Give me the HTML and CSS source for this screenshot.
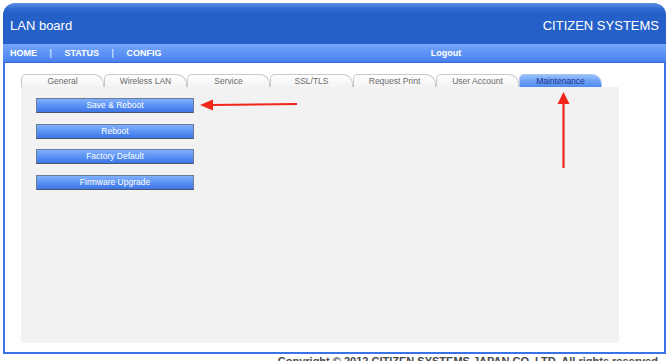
FILE: index.html
```html
<!DOCTYPE html>
<html lang="en">
<head>
    <meta charset="UTF-8">
    <title>LAN board - Maintenance</title>
    <link rel="stylesheet" href="styles.css">
</head>
<body>
    <div class="page">
        <div class="header">
            <div class="title">LAN board</div>
            <div class="brand">CITIZEN SYSTEMS</div>
        </div>

        <div class="nav">
            <div class="nav-left">
                <a href="#">HOME</a>
                <span class="sep">|</span>
                <a href="#">STATUS</a>
                <span class="sep">|</span>
                <a href="#">CONFIG</a>
            </div>
            <div class="nav-right">
                <a href="#">Logout</a>
            </div>
        </div>

        <div class="panel">
            <div class="tabs">
                <div class="tab">General</div>
                <div class="tab">Wireless LAN</div>
                <div class="tab">Service</div>
                <div class="tab">SSL/TLS</div>
                <div class="tab">Request Print</div>
                <div class="tab">User Account</div>
                <div class="tab active">Maintenance</div>
            </div>
            <div class="tab-body">
                <button class="action-btn">Save &amp; Reboot</button>
                <button class="action-btn">Reboot</button>
                <button class="action-btn">Factory Default</button>
                <button class="action-btn">Firmware Upgrade</button>
            </div>
        </div>

        <div class="footer">Copyright &copy; 2012 CITIZEN SYSTEMS JAPAN CO.,LTD. All rights reserved.</div>
    </div>

    <!-- annotation arrows -->
    <svg class="marks" width="670" height="361" viewBox="0 0 670 361">
        <line x1="297" y1="104" x2="211" y2="105" stroke="#f2261a" stroke-width="2.2"/>
        <polygon points="200,105 213,99.5 213,110.5" fill="#f2261a"/>
        <line x1="563.5" y1="168" x2="563.5" y2="102" stroke="#f2261a" stroke-width="2.2"/>
        <polygon points="563.5,92 557.5,104 569.5,104" fill="#f2261a"/>
    </svg>
</body>
</html>
```

FILE: styles.css
```css
body {
    margin: 0;
    padding: 3px 3px 0 3px;
    background: #fff;
    font-family: "Liberation Sans", Arial, sans-serif;
    overflow: hidden;
}
.page {
    width: 663px;
}
.header {
    height: 41px;
    display: flex;
    align-items: center;
    justify-content: space-between;
    padding: 4px 7px 0 7px;
    box-sizing: border-box;
    background: linear-gradient(#5c8de2 0, #2f69d0 6px, #2460c8 12px, #2460c8 100%);
    border-radius: 12px 12px 0 0;
    color: #fff;
    font-size: 13px;
}
.nav {
    height: 19px;
    display: flex;
    align-items: center;
    background: linear-gradient(#74a5fa, #5a90f5 60%, #4a80ec);
    border-bottom: 1px solid #3a6ad8;
    box-sizing: border-box;
    font-size: 9px;
    font-weight: bold;
}
.nav a {
    color: #fff;
    text-decoration: none;
}
.nav-left {
    width: 223px;
    padding-left: 7px;
    box-sizing: border-box;
    color: #fff;
}
.sep {
    padding: 0 10px;
    font-weight: normal;
}
.nav-right {
    flex: 1;
    text-align: center;
}
.panel {
    height: 291px;
    box-sizing: border-box;
    border: 2px solid #3a72e8;
    border-top: none;
    padding: 11px 0 0 16px;
}
.tabs {
    display: flex;
    height: 13px;
}
.tab {
    width: 83px;
    height: 13px;
    box-sizing: border-box;
    border: 1px solid #c9c9c9;
    border-bottom: none;
    border-radius: 5px 10px 0 0;
    background: linear-gradient(#ffffff, #f3f3f3);
    color: #6a6a6a;
    font-size: 8.5px;
    line-height: 12px;
    text-align: center;
}
.tab.active {
    background: linear-gradient(#95c0fc, #6fa2f6 50%, #4e8af0);
    border-color: #a9c4ee;
    color: #1c2f8c;
}
.tab-body {
    width: 598px;
    height: 256px;
    box-sizing: border-box;
    background: #f2f2f2;
    padding: 11px 0 0 15px;
    display: flex;
    flex-direction: column;
    align-items: flex-start;
    gap: 10.5px;
}
.action-btn {
    width: 158px;
    height: 15px;
    padding: 0;
    border: 1px solid #6b7a96;
    border-bottom-color: #4a5670;
    background: linear-gradient(#7fb0fb, #5b93f4 50%, #3d76e6);
    color: #fff;
    font-family: "Liberation Sans", Arial, sans-serif;
    font-size: 8.5px;
    line-height: 13px;
    text-align: center;
}
.footer {
    text-align: right;
    padding-right: 5px;
    margin-top: 1px;
    font-size: 11px;
    font-weight: bold;
    line-height: 12px;
    color: #4a4a4a;
}
.marks {
    position: absolute;
    left: 0;
    top: 0;
    pointer-events: none;
}
```
